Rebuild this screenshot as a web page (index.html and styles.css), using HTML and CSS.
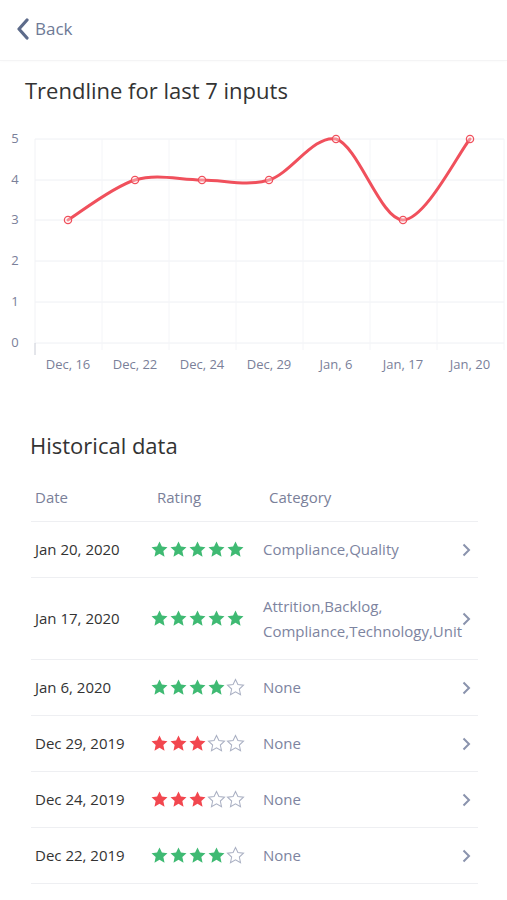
FILE: index.html
```html
<!DOCTYPE html>
<html>
<head>
<meta charset="utf-8">
<link rel="stylesheet" href="styles.css">
</head>
<body>
<header class="topbar">
  <a class="back">
    <svg class="back-icon" width="14" height="22" viewBox="0 0 14 22"><path d="M11 2 L3 11 L11 20" fill="none" stroke="#5d6b8a" stroke-width="3.2" stroke-linecap="round" stroke-linejoin="round"/></svg>
    <span>Back</span>
  </a>
</header>

<h2 class="section-title trend-title">Trendline for last 7 inputs</h2>

<svg class="chart" width="507" height="260" viewBox="0 120 507 260">
  <g stroke="#eef0f4" stroke-width="1">
    <line x1="35" y1="139" x2="504" y2="139"/>
    <line x1="35" y1="180" x2="504" y2="180"/>
    <line x1="35" y1="220" x2="504" y2="220"/>
    <line x1="35" y1="261" x2="504" y2="261"/>
    <line x1="35" y1="302" x2="504" y2="302"/>
    <line x1="35" y1="343" x2="504" y2="343"/>
  </g>
  <g stroke="#f4f5f8" stroke-width="1">
    <line x1="102" y1="139" x2="102" y2="350"/>
    <line x1="169" y1="139" x2="169" y2="350"/>
    <line x1="236" y1="139" x2="236" y2="350"/>
    <line x1="303" y1="139" x2="303" y2="350"/>
    <line x1="370" y1="139" x2="370" y2="350"/>
    <line x1="437" y1="139" x2="437" y2="350"/>
    <line x1="504" y1="139" x2="504" y2="350"/>
  </g>
  <line x1="35" y1="139" x2="35" y2="343" stroke="#f1f2f5"/>
  <line x1="35" y1="343" x2="35" y2="355" stroke="#c9ccd6"/>
  <g class="axis-label" text-anchor="middle">
    <text x="15" y="143">5</text>
    <text x="15" y="184">4</text>
    <text x="15" y="224">3</text>
    <text x="15" y="265">2</text>
    <text x="15" y="306">1</text>
    <text x="15" y="347">0</text>
    <text x="68" y="369">Dec, 16</text>
    <text x="135" y="369">Dec, 22</text>
    <text x="202" y="369">Dec, 24</text>
    <text x="269" y="369">Dec, 29</text>
    <text x="336" y="369">Jan, 6</text>
    <text x="403" y="369">Jan, 17</text>
    <text x="470" y="369">Jan, 20</text>
  </g>
  <path d="M68 220 C79.2 213.3 112.7 186.7 135 180 C157.3 173.3 179.7 180 202 180 C224.3 180 246.7 186.8 269 180 C291.3 173.2 313.7 134.5 336 139 C358.3 145.7 380.7 220 403 220 C425.3 220 458.8 152.5 470 139" fill="none" stroke="#f0505c" stroke-width="3" stroke-linecap="round"/>
  <g fill="#fff" fill-opacity="0.35" stroke="#f0505c" stroke-width="1.3">
    <circle cx="68" cy="220" r="3.6"/>
    <circle cx="135" cy="180" r="3.6"/>
    <circle cx="202" cy="180" r="3.6"/>
    <circle cx="269" cy="180" r="3.6"/>
    <circle cx="336" cy="139" r="3.6"/>
    <circle cx="403" cy="220" r="3.6"/>
    <circle cx="470" cy="139" r="3.6"/>
  </g>
</svg>

<section class="history">
  <h2 class="section-title hist-title">Historical data</h2>
  <div class="thead">
    <span class="th-date">Date</span>
    <span class="th-rating">Rating</span>
    <span class="th-cat">Category</span>
  </div>

  <div class="row">
    <span class="date">Jan 20, 2020</span>
    <span class="stars">
      <svg class="star on green" viewBox="0 0 24 24"><path d="M12 1.8l3.05 6.5 7.05.8-5.25 4.8 1.5 7.1L12 17.4 5.650 21l1.5-7.1L1.9 9.1l7.05-.8z"/></svg>
      <svg class="star on green" viewBox="0 0 24 24"><path d="M12 1.8l3.05 6.5 7.05.8-5.25 4.8 1.5 7.1L12 17.4 5.65 21l1.5-7.1L1.9 9.1l7.05-.8z"/></svg>
      <svg class="star on green" viewBox="0 0 24 24"><path d="M12 1.8l3.05 6.5 7.05.8-5.25 4.8 1.5 7.1L12 17.4 5.65 21l1.5-7.1L1.9 9.1l7.05-.8z"/></svg>
      <svg class="star on green" viewBox="0 0 24 24"><path d="M12 1.8l3.05 6.5 7.05.8-5.25 4.8 1.5 7.1L12 17.4 5.65 21l1.5-7.1L1.9 9.1l7.05-.8z"/></svg>
      <svg class="star on green" viewBox="0 0 24 24"><path d="M12 1.8l3.05 6.5 7.05.8-5.25 4.8 1.5 7.1L12 17.4 5.65 21l1.5-7.1L1.9 9.1l7.05-.8z"/></svg>
    </span>
    <span class="cat">Compliance,Quality</span>
    <svg class="chev" width="10" height="16" viewBox="0 0 10 16"><path d="M2.5 2.5 L8 8 L2.5 13.5" fill="none" stroke="#8a93ad" stroke-width="2"/></svg>
  </div>

  <div class="row tall">
    <span class="date">Jan 17, 2020</span>
    <span class="stars">
      <svg class="star on green" viewBox="0 0 24 24"><path d="M12 1.8l3.05 6.5 7.05.8-5.25 4.8 1.5 7.1L12 17.4 5.65 21l1.5-7.1L1.9 9.1l7.05-.8z"/></svg>
      <svg class="star on green" viewBox="0 0 24 24"><path d="M12 1.8l3.05 6.5 7.05.8-5.25 4.8 1.5 7.1L12 17.4 5.65 21l1.5-7.1L1.9 9.1l7.05-.8z"/></svg>
      <svg class="star on green" viewBox="0 0 24 24"><path d="M12 1.8l3.05 6.5 7.05.8-5.25 4.8 1.5 7.1L12 17.4 5.65 21l1.5-7.1L1.9 9.1l7.05-.8z"/></svg>
      <svg class="star on green" viewBox="0 0 24 24"><path d="M12 1.8l3.05 6.5 7.05.8-5.25 4.8 1.5 7.1L12 17.4 5.65 21l1.5-7.1L1.9 9.1l7.05-.8z"/></svg>
      <svg class="star on green" viewBox="0 0 24 24"><path d="M12 1.8l3.05 6.5 7.05.8-5.25 4.8 1.5 7.1L12 17.4 5.65 21l1.5-7.1L1.9 9.1l7.05-.8z"/></svg>
    </span>
    <span class="cat">Attrition,Backlog,<br>Compliance,Technology,Unit</span>
    <svg class="chev" width="10" height="16" viewBox="0 0 10 16"><path d="M2.5 2.5 L8 8 L2.5 13.5" fill="none" stroke="#8a93ad" stroke-width="2"/></svg>
  </div>

  <div class="row">
    <span class="date">Jan 6, 2020</span>
    <span class="stars">
      <svg class="star on green" viewBox="0 0 24 24"><path d="M12 1.8l3.05 6.5 7.05.8-5.25 4.8 1.5 7.1L12 17.4 5.65 21l1.5-7.1L1.9 9.1l7.05-.8z"/></svg>
      <svg class="star on green" viewBox="0 0 24 24"><path d="M12 1.8l3.05 6.5 7.05.8-5.25 4.8 1.5 7.1L12 17.4 5.65 21l1.5-7.1L1.9 9.1l7.05-.8z"/></svg>
      <svg class="star on green" viewBox="0 0 24 24"><path d="M12 1.8l3.05 6.5 7.05.8-5.25 4.8 1.5 7.1L12 17.4 5.65 21l1.5-7.1L1.9 9.1l7.05-.8z"/></svg>
      <svg class="star on green" viewBox="0 0 24 24"><path d="M12 1.8l3.05 6.5 7.05.8-5.25 4.8 1.5 7.1L12 17.4 5.65 21l1.5-7.1L1.9 9.1l7.05-.8z"/></svg>
      <svg class="star off" viewBox="0 0 24 24"><path d="M12 1.8l3.05 6.5 7.05.8-5.25 4.8 1.5 7.1L12 17.4 5.65 21l1.5-7.1L1.9 9.1l7.05-.8z"/></svg>
    </span>
    <span class="cat">None</span>
    <svg class="chev" width="10" height="16" viewBox="0 0 10 16"><path d="M2.5 2.5 L8 8 L2.5 13.5" fill="none" stroke="#8a93ad" stroke-width="2"/></svg>
  </div>

  <div class="row">
    <span class="date">Dec 29, 2019</span>
    <span class="stars">
      <svg class="star on red" viewBox="0 0 24 24"><path d="M12 1.8l3.05 6.5 7.05.8-5.25 4.8 1.5 7.1L12 17.4 5.65 21l1.5-7.1L1.9 9.1l7.05-.8z"/></svg>
      <svg class="star on red" viewBox="0 0 24 24"><path d="M12 1.8l3.05 6.5 7.05.8-5.25 4.8 1.5 7.1L12 17.4 5.65 21l1.5-7.1L1.9 9.1l7.05-.8z"/></svg>
      <svg class="star on red" viewBox="0 0 24 24"><path d="M12 1.8l3.05 6.5 7.05.8-5.25 4.8 1.5 7.1L12 17.4 5.65 21l1.5-7.1L1.9 9.1l7.05-.8z"/></svg>
      <svg class="star off" viewBox="0 0 24 24"><path d="M12 1.8l3.05 6.5 7.05.8-5.25 4.8 1.5 7.1L12 17.4 5.65 21l1.5-7.1L1.9 9.1l7.05-.8z"/></svg>
      <svg class="star off" viewBox="0 0 24 24"><path d="M12 1.8l3.05 6.5 7.05.8-5.25 4.8 1.5 7.1L12 17.4 5.65 21l1.5-7.1L1.9 9.1l7.05-.8z"/></svg>
    </span>
    <span class="cat">None</span>
    <svg class="chev" width="10" height="16" viewBox="0 0 10 16"><path d="M2.5 2.5 L8 8 L2.5 13.5" fill="none" stroke="#8a93ad" stroke-width="2"/></svg>
  </div>

  <div class="row">
    <span class="date">Dec 24, 2019</span>
    <span class="stars">
      <svg class="star on red" viewBox="0 0 24 24"><path d="M12 1.8l3.05 6.5 7.05.8-5.25 4.8 1.5 7.1L12 17.4 5.65 21l1.5-7.1L1.9 9.1l7.05-.8z"/></svg>
      <svg class="star on red" viewBox="0 0 24 24"><path d="M12 1.8l3.05 6.5 7.05.8-5.25 4.8 1.5 7.1L12 17.4 5.65 21l1.5-7.1L1.9 9.1l7.05-.8z"/></svg>
      <svg class="star on red" viewBox="0 0 24 24"><path d="M12 1.8l3.05 6.5 7.05.8-5.25 4.8 1.5 7.1L12 17.4 5.65 21l1.5-7.1L1.9 9.1l7.05-.8z"/></svg>
      <svg class="star off" viewBox="0 0 24 24"><path d="M12 1.8l3.05 6.5 7.05.8-5.25 4.8 1.5 7.1L12 17.4 5.65 21l1.5-7.1L1.9 9.1l7.05-.8z"/></svg>
      <svg class="star off" viewBox="0 0 24 24"><path d="M12 1.8l3.05 6.5 7.05.8-5.25 4.8 1.5 7.1L12 17.4 5.65 21l1.5-7.1L1.9 9.1l7.05-.8z"/></svg>
    </span>
    <span class="cat">None</span>
    <svg class="chev" width="10" height="16" viewBox="0 0 10 16"><path d="M2.5 2.5 L8 8 L2.5 13.5" fill="none" stroke="#8a93ad" stroke-width="2"/></svg>
  </div>

  <div class="row">
    <span class="date">Dec 22, 2019</span>
    <span class="stars">
      <svg class="star on green" viewBox="0 0 24 24"><path d="M12 1.8l3.05 6.5 7.05.8-5.25 4.8 1.5 7.1L12 17.4 5.65 21l1.5-7.1L1.9 9.1l7.05-.8z"/></svg>
      <svg class="star on green" viewBox="0 0 24 24"><path d="M12 1.8l3.05 6.5 7.05.8-5.25 4.8 1.5 7.1L12 17.4 5.65 21l1.5-7.1L1.9 9.1l7.05-.8z"/></svg>
      <svg class="star on green" viewBox="0 0 24 24"><path d="M12 1.8l3.05 6.5 7.05.8-5.25 4.8 1.5 7.1L12 17.4 5.65 21l1.5-7.1L1.9 9.1l7.05-.8z"/></svg>
      <svg class="star on green" viewBox="0 0 24 24"><path d="M12 1.8l3.05 6.5 7.05.8-5.25 4.8 1.5 7.1L12 17.4 5.65 21l1.5-7.1L1.9 9.1l7.05-.8z"/></svg>
      <svg class="star off" viewBox="0 0 24 24"><path d="M12 1.8l3.05 6.5 7.05.8-5.25 4.8 1.5 7.1L12 17.4 5.65 21l1.5-7.1L1.9 9.1l7.05-.8z"/></svg>
    </span>
    <span class="cat">None</span>
    <svg class="chev" width="10" height="16" viewBox="0 0 10 16"><path d="M2.5 2.5 L8 8 L2.5 13.5" fill="none" stroke="#8a93ad" stroke-width="2"/></svg>
  </div>
</section>
</body>
</html>
```

FILE: styles.css
```css
* { box-sizing: border-box; }

html, body {
  margin: 0;
  padding: 0;
  background: #ffffff;
  font-family: "Open Sans", "Noto Sans", sans-serif;
  color: #333333;
}

.topbar {
  height: 61px;
  display: flex;
  align-items: center;
  padding: 0 0 2px 16px;
  border-bottom: 1px solid #f4f4f5;
  box-shadow: 0 1px 3px rgba(0, 0, 0, 0.02);
}

.back {
  display: flex;
  align-items: center;
  gap: 5px;
  color: #6e7a96;
  font-size: 17px;
  line-height: 22px;
}

.back-icon { display: block; }

.section-title {
  margin: 0;
  font-weight: 400;
  font-size: 22px;
  line-height: 30px;
  color: #333333;
}

.trend-title {
  padding: 14px 0 0 25px;
  height: 59px;
}

.chart {
  display: block;
}

.axis-label text {
  font-family: "Open Sans", "Noto Sans", sans-serif;
  font-size: 13px;
  fill: #7a8099;
}

.history {
  margin: 0 29px 0 31px;
  padding-top: 50px;
}

.hist-title {
  margin-left: -1px;
}

.thead {
  display: flex;
  font-size: 15px;
  line-height: 20px;
  color: #7a8099;
  padding: 27px 0 14px 4px;
  border-bottom: 1px solid #eeeff2;
}

.th-date { width: 122px; }
.th-rating { width: 112px; }

.row {
  display: flex;
  align-items: center;
  height: 56px;
  padding-left: 4px;
  border-bottom: 1px solid #eeeff2;
}

.row.tall { height: 82px; }

.date {
  width: 115px;
  font-size: 15px;
  line-height: 25px;
  color: #333333;
}

.stars {
  display: flex;
  width: 113px;
}

.star {
  width: 19px;
  height: 19px;
  display: block;
}

.star.on.green { fill: #3fba73; }
.star.on.red { fill: #f2474f; }
.star.off {
  fill: none;
  stroke: #aab0c3;
  stroke-width: 1.3;
}

.cat {
  flex: 1;
  font-size: 15px;
  line-height: 25px;
  color: #7d84a0;
  white-space: nowrap;
}

.chev {
  display: block;
  margin-right: 7px;
  margin-left: -10px;
}
```
